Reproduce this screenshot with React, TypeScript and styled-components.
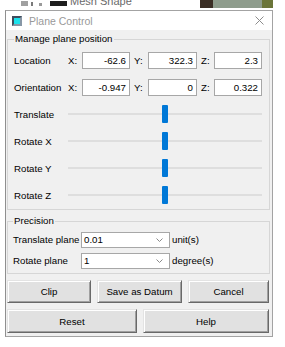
import styled, { createGlobalStyle } from 'styled-components';

const GlobalStyle = createGlobalStyle`
  html, body {
    margin: 0;
    padding: 0;
    background: #fff;
  }
  body {
    font-family: "Liberation Sans", Arial, sans-serif;
    font-size: 9.7px;
    color: #000;
  }
  * { box-sizing: border-box; }
`;

const Screen = styled.div`
  width: 285px;
  height: 347px;
  overflow: hidden;
  background: #fff;
`;

// strip of the window that sits behind the dialog
const Backdrop = styled.div`
  height: 10px;
  padding-right: 12px;
  display: flex;
  align-items: flex-start;
  overflow: hidden;
`;

const Blob = styled.div<{ $w: number; $h: number; $bg: string; $ml?: number; $mt?: number }>`
  flex-shrink: 0;
  width: ${p => p.$w}px;
  height: ${p => p.$h}px;
  margin-left: ${p => p.$ml ?? 0}px;
  margin-top: ${p => p.$mt ?? 0}px;
  background: ${p => p.$bg};
`;

const BackText = styled.span`
  margin: -6px 0 0 3px;
  font-size: 11px;
  line-height: 14px;
  color: #6a6a6a;
  white-space: nowrap;
`;

const Spacer = styled.div`
  flex: 1;
`;

const Window = styled.div`
  margin-left: 5px;
  width: 268px;
  border: 1px solid #a3a3a3;
  border-left-color: #8f8f8f;
  background: #f0f0f0;
`;

const TitleBar = styled.div`
  height: 19px;
  background: #fff;
  display: flex;
  align-items: center;
  gap: 7px;
  padding: 0 8px 0 6px;
`;

const Title = styled.span`
  flex: 1;
  font-size: 10.5px;
  color: #999;
`;

const Body = styled.div`
  padding: 3px 2px 3px 1px;
`;

const Group = styled.fieldset<{ $padLeft: number; $padBottom: number }>`
  margin: 0;
  min-width: 0;
  border: 1px solid #d6d6d6;
  padding: 2px 7px ${p => p.$padBottom}px ${p => p.$padLeft}px;

  & + & {
    margin-top: 5px;
  }
`;

const Legend = styled.legend`
  padding: 0 1px;
  line-height: 12px;
`;

const Row = styled.div<{ $h: number }>`
  height: ${p => p.$h}px;
  display: flex;
  align-items: center;
`;

const RowLabel = styled.span<{ $w: number }>`
  flex-shrink: 0;
  width: ${p => p.$w}px;
  white-space: nowrap;
`;

const Axis = styled.span<{ $w: number; $pl?: number }>`
  flex-shrink: 0;
  width: ${p => p.$w}px;
  padding-left: ${p => p.$pl ?? 0}px;
`;

const NumBox = styled.div<{ $w: number }>`
  flex-shrink: 0;
  width: ${p => p.$w}px;
  height: 17px;
  border: 1px solid #a7a7a7;
  background: #fff;
  text-align: right;
  padding-right: 3px;
  line-height: 15px;
`;

const Track = styled.div`
  position: relative;
  flex: 1;
  height: 2px;
  margin-bottom: 2px;
  background: #dedede;
`;

const Thumb = styled.div`
  position: absolute;
  top: 50%;
  width: 6px;
  height: 18px;
  margin: -9px 0 0 -3px;
  background: #0078d7;
  border-radius: 1px;
`;

const Combo = styled.div`
  flex-shrink: 0;
  width: 89px;
  height: 16px;
  border: 1px solid #a7a7a7;
  background: #fff;
  display: flex;
  align-items: center;
  padding: 0 6px 0 2px;
`;

const ComboText = styled.span`
  flex: 1;
`;

const Unit = styled.span`
  margin-left: 2px;
`;

const ButtonRow = styled.div<{ $cols: string; $mt: number }>`
  display: grid;
  grid-template-columns: ${p => p.$cols};
  column-gap: 6px;
  margin-top: ${p => p.$mt}px;
`;

const Button = styled.button<{ $h: number }>`
  height: ${p => p.$h}px;
  margin: 0;
  padding: 0;
  font-family: inherit;
  font-size: 9.7px;
  color: #000;
  background: #e1e1e1;
  border: 1px solid;
  border-color: #e3e3e3 #696969 #696969 #e3e3e3;
  box-shadow: inset 1px 1px #fff, inset -1px -1px #a0a0a0;
  border-radius: 0;
`;

const PlaneIcon = () => (
  <svg width="10" height="10" viewBox="0 0 10 10">
    <rect x="0" y="0" width="10" height="10" fill="#8797a6" />
    <polygon points="0,0 10,0 8,2 2,2 2,8 0,10" fill="#3e4d5d" />
    <rect x="2" y="2" width="6" height="6" fill="#1de2ec" />
  </svg>
);

const CloseIcon = () => (
  <svg width="9" height="9" viewBox="0 0 9 9">
    <path d="M0.5 0.5 L8.5 8.5 M8.5 0.5 L0.5 8.5" stroke="#8c8c8c" strokeWidth="1" fill="none" />
  </svg>
);

const Chevron = () => (
  <svg width="7" height="4" viewBox="0 0 7 4">
    <polyline points="0.5,0.5 3.5,3.5 6.5,0.5" stroke="#8a8a8a" strokeWidth="1" fill="none" />
  </svg>
);

const coords = [
  { label: 'Location', x: '-62.6', y: '322.3', z: '2.3' },
  { label: 'Orientation', x: '-0.947', y: '0', z: '0.322' },
];

const sliders = [
  { label: 'Translate', value: 50 },
  { label: 'Rotate X', value: 50 },
  { label: 'Rotate Y', value: 50 },
  { label: 'Rotate Z', value: 50 },
];

const precision = [
  { label: 'Translate plane', value: '0.01', unit: 'unit(s)' },
  { label: 'Rotate plane', value: '1', unit: 'degree(s)' },
];

export default function App() {
  return (
    <Screen>
      <GlobalStyle />
      <Backdrop>
        <Blob $w={7} $h={5} $bg="#a0a0a0" $ml={21} $mt={1} />
        <Blob $w={2} $h={4} $bg="#7a7a7a" $ml={3} $mt={2} />
        <Blob $w={3} $h={3} $bg="#9a9a9a" $ml={6} $mt={3} />
        <Blob $w={17} $h={5} $bg="#1e1e1e" $ml={8} $mt={1} />
        <BackText>Mesh Shape</BackText>
        <Spacer />
        <Blob $w={13} $h={8} $bg="#3b2e25" />
        <Blob $w={49} $h={8} $bg="#8e9c8c" />
        <Blob $w={11} $h={8} $bg="#6b7539" />
      </Backdrop>
      <Window>
        <TitleBar>
          <PlaneIcon />
          <Title>Plane Control</Title>
          <CloseIcon />
        </TitleBar>
        <Body>
          <Group $padLeft={6} $padBottom={0}>
            <Legend>Manage plane position</Legend>
            {coords.map(c => (
              <Row $h={27} key={c.label}>
                <RowLabel $w={54}>{c.label}</RowLabel>
                <Axis $w={14}>X:</Axis>
                <NumBox $w={48}>{c.x}</NumBox>
                <Axis $w={18} $pl={4}>Y:</Axis>
                <NumBox $w={49}>{c.y}</NumBox>
                <Axis $w={17} $pl={4}>Z:</Axis>
                <NumBox $w={48}>{c.z}</NumBox>
              </Row>
            ))}
            {sliders.map(s => (
              <Row $h={27} key={s.label}>
                <RowLabel $w={54}>{s.label}</RowLabel>
                <Track>
                  <Thumb style={{ left: `${s.value}%` }} />
                </Track>
              </Row>
            ))}
          </Group>
          <Group $padLeft={5} $padBottom={2}>
            <Legend>Precision</Legend>
            {precision.map(p => (
              <Row $h={21} key={p.label}>
                <RowLabel $w={68}>{p.label}</RowLabel>
                <Combo>
                  <ComboText>{p.value}</ComboText>
                  <Chevron />
                </Combo>
                <Unit>{p.unit}</Unit>
              </Row>
            ))}
          </Group>
          <ButtonRow $cols="84px 85px 81px" $mt={6}>
            <Button $h={23}>Clip</Button>
            <Button $h={23}>Save as Datum</Button>
            <Button $h={23}>Cancel</Button>
          </ButtonRow>
          <ButtonRow $cols="130px 126px" $mt={6}>
            <Button $h={24}>Reset</Button>
            <Button $h={24}>Help</Button>
          </ButtonRow>
        </Body>
      </Window>
    </Screen>
  );
}
